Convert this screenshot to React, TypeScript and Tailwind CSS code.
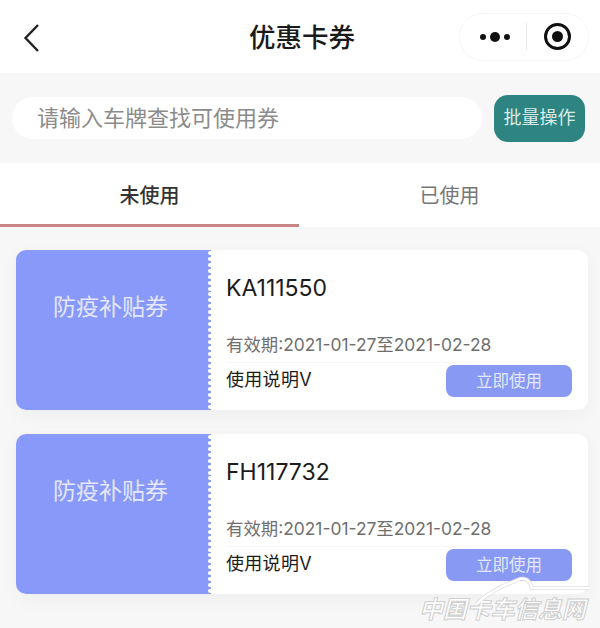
const cjk = "font-['Inter','Noto_Sans_CJK_SC',sans-serif]";

function Coupon({ plate }: { plate: string }) {
  return (
    <div className="flex h-[160px] w-[572px] rounded-[10px] bg-white shadow-[0_5px_20px_rgba(0,0,0,0.04)]">
      <div className="relative flex w-[195px] shrink-0 justify-center rounded-l-[10px] bg-[#8899fa] pr-[6px] pt-[40px]">
        <span className="text-[23px] leading-[34px] text-[#e4e8fb]">防疫补贴券</span>
        <div className="absolute right-0 top-0 flex h-full w-[3px] flex-col justify-between overflow-hidden py-[1px]">
          {Array.from({ length: 27 }).map((_, i) => (
            <span key={i} className="block h-[4px] w-[3px] rounded-l-full bg-white" />
          ))}
        </div>
      </div>
      <div className="flex min-w-0 flex-1 flex-col pl-[15px] pr-[16px]">
        <div className="mt-[21px] text-[23px] leading-[34px] text-[#1c1c1c]">{plate}</div>
        <div className="mt-[27px] whitespace-nowrap text-[17.4px] leading-[26px] text-[#6f6f6f]">
          有效期:2021-01-27至2021-02-28
        </div>
        <div className="mt-[4px] flex items-start justify-between border-t border-[#f7f7f7]">
          <span className="mt-[4px] text-[18px] leading-[26px] tracking-[0.3px] text-[#1c1c1c]">使用说明V</span>
          <button className="mt-[2px] flex h-[32px] w-[126px] items-center justify-center rounded-[8px] bg-[#8899f3] text-[16.5px] text-[#e4e8fb]">
            立即使用
          </button>
        </div>
      </div>
    </div>
  );
}

export default function App() {
  return (
    <div className={`relative h-[628px] w-[600px] overflow-hidden bg-[#f7f7f7] ${cjk}`}>
      <header className="flex h-[73px] items-center justify-between bg-white pl-[21px] pr-[11px]">
        <svg width="22" height="32" viewBox="0 0 22 32" fill="none" stroke="#222" strokeWidth="2.4">
          <path d="M17 4 L4.5 17 L17 30" />
        </svg>
        <div className="absolute left-[249px] top-[18px] text-[26.5px] font-medium leading-[38px] text-[#1a1a1a]">优惠卡券</div>
        <div className="flex h-[48px] w-[130px] items-center rounded-full border border-[#f6f6f6] bg-white">
          <div className="flex w-[66px] items-center justify-center gap-[4px] pl-[4px]">
            <span className="h-[6px] w-[6px] rounded-full bg-[#111]" />
            <span className="h-[10px] w-[10px] rounded-full bg-[#111]" />
            <span className="h-[6px] w-[6px] rounded-full bg-[#111]" />
          </div>
          <span className="h-[28px] w-px bg-[#ececec]" />
          <div className="flex flex-1 items-center justify-center">
            <span className="flex h-[27px] w-[27px] items-center justify-center rounded-full border-[3px] border-[#111]">
              <span className="h-[11px] w-[11px] rounded-full bg-[#111]" />
            </span>
          </div>
        </div>
      </header>

      <div className="flex h-[90px] items-center gap-[12px] pl-[12px]">
        <div className="flex h-[42px] w-[470px] items-center rounded-full bg-white pl-[25px] pt-[1px] text-[22px] text-[#8b8b8b]">
          请输入车牌查找可使用券
        </div>
        <button className="flex h-[47px] w-[91px] items-center justify-center rounded-[14px] bg-[#2e8480] pb-[2px] text-[18px] text-[#d9ecea]">
          批量操作
        </button>
      </div>

      <div className="flex h-[64px] bg-white">
        <div className="flex h-full w-[299px] items-center justify-center border-b-[3px] border-[#c98585] pt-[5px] text-[20px] font-medium text-[#333]">
          未使用
        </div>
        <div className="flex h-full flex-1 items-center justify-center pt-[1px] text-[20px] text-[#777]">已使用</div>
      </div>

      <div className="flex flex-col gap-[24px] pl-[16px] pt-[23px]">
        <Coupon plate="KA111550" />
        <Coupon plate="FH117732" />
      </div>

      <div className="absolute left-[419px] top-[595px] text-[24px] font-bold italic leading-[30px] tracking-[-0.2px] text-white [-webkit-text-stroke:1px_#cfcfcf]">
        中国卡车信息网
      </div>
      <svg className="absolute left-[470px] top-[572px]" width="125" height="36" viewBox="0 0 125 36" fill="none">
        <path d="M7 32 C14 24 22 20 33 14 L50 7 C56 6 58 8 60 11 L62 16 L120 16" stroke="#dcdcdc" strokeWidth="4" />
        <path d="M7 32 C14 24 22 20 33 14 L50 7 C56 6 58 8 60 11 L62 16 L120 16" stroke="#fff" strokeWidth="2.5" />
      </svg>
    </div>
  );
}
